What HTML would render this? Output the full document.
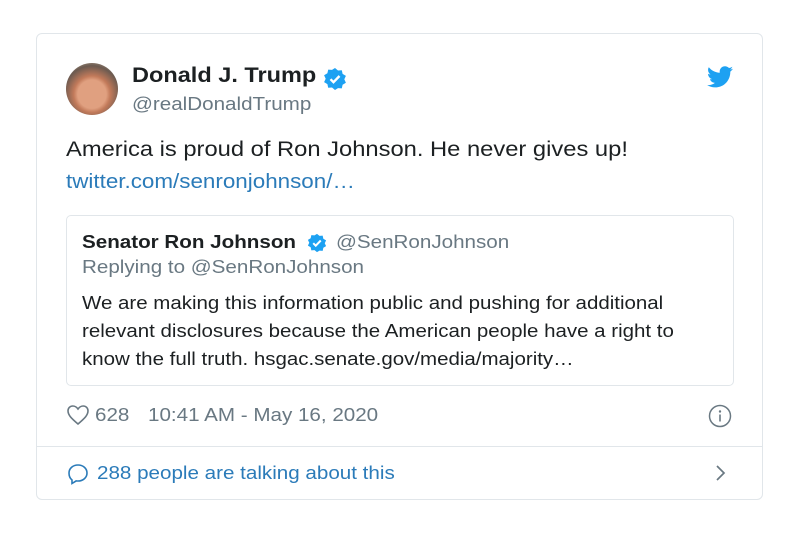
<!DOCTYPE html>
<html><head><meta charset="utf-8"><style>
body{margin:0;width:800px;height:537px;background:#fff;font-family:"Liberation Sans",sans-serif;position:relative;overflow:hidden}
.card{position:absolute;left:36px;top:33px;width:727px;height:467px;border:1px solid #e1e6ea;border-radius:6px;box-sizing:border-box}
.abs{position:absolute;white-space:nowrap}
.s{transform:scaleX(1.12);transform-origin:0 0}
.av{position:absolute;left:66px;top:63px;width:52px;height:52px;border-radius:50%;background:radial-gradient(circle at 50% 60%,#e0a080 0 35%,#c27a5a 45%,#6b5a50 70%,#d8c8b0 100%)}
.quote{position:absolute;left:66px;top:215px;width:668px;height:171px;border:1px solid #e1e6ea;border-radius:5px;box-sizing:border-box}
</style></head><body>
<div class="card"></div>
<div class="av"></div>
<div class="abs s" style="left:132px;top:64px;font-size:21px;font-weight:bold;color:#1c2022">Donald J. Trump</div>
<svg class="abs" style="left:323px;top:67px" width="24" height="24" viewBox="0 0 24 24"><path fill="#1da1f2" d="M12 1l3 2.5 3.8-.3.8 3.7 3.3 2-1.6 3.4 1.6 3.4-3.3 2-.8 3.7-3.8-.3L12 23l-3-2.5-3.8.3-.8-3.7-3.3-2L2.7 11.7 1.1 8.3l3.3-2 .8-3.7 3.8.3z"/><path d="M7.5 12.2l3 3 6-6.2" stroke="#fff" stroke-width="2.4" fill="none"/></svg>
<div class="abs s" style="left:132px;top:93px;font-size:18.4px;color:#697882">@realDonaldTrump</div>
<svg class="abs" style="left:707px;top:66px" width="26" height="22" viewBox="0 0 24 20"><path fill="#1da1f2" d="M24 2.4c-.9.4-1.8.7-2.8.8 1-.6 1.8-1.6 2.2-2.7-1 .6-2 1-3.1 1.2C19.3.7 18 .1 16.6.1c-2.7 0-4.9 2.2-4.9 4.9 0 .4 0 .8.1 1.1C7.7 5.9 4.1 4 1.7 1 1.2 1.7 1 2.6 1 3.5c0 1.7.9 3.2 2.2 4.1-.8 0-1.6-.2-2.2-.6v.1c0 2.4 1.7 4.4 3.9 4.8-.4.1-.8.2-1.3.2-.3 0-.6 0-.9-.1.6 2 2.4 3.4 4.6 3.4-1.7 1.3-3.8 2.1-6.1 2.1-.4 0-.8 0-1.2-.1 2.2 1.4 4.8 2.2 7.5 2.2 9.1 0 14-7.5 14-14v-.6c1-.7 1.8-1.6 2.5-2.6z"/></svg>
<div class="abs s" style="left:66px;top:138px;font-size:21.2px;color:#1c2022">America is proud of Ron Johnson. He never gives up!</div>
<div class="abs s" style="left:66px;top:171px;font-size:20px;color:#2b7bb9">twitter.com/senronjohnson/…</div>
<div class="quote"></div>
<div class="abs s" style="left:82px;top:231px;font-size:18.4px;font-weight:bold;color:#1c2022">Senator Ron Johnson</div>
<svg class="abs" style="left:307px;top:233px" width="20" height="20" viewBox="0 0 24 24"><path fill="#1da1f2" d="M12 1l3 2.5 3.8-.3.8 3.7 3.3 2-1.6 3.4 1.6 3.4-3.3 2-.8 3.7-3.8-.3L12 23l-3-2.5-3.8.3-.8-3.7-3.3-2L2.7 11.7 1.1 8.3l3.3-2 .8-3.7 3.8.3z"/><path d="M7.5 12.2l3 3 6-6.2" stroke="#fff" stroke-width="2.4" fill="none"/></svg>
<div class="abs s" style="left:336px;top:231px;font-size:18.4px;color:#697882">@SenRonJohnson</div>
<div class="abs s" style="left:82px;top:256px;font-size:18.4px;color:#697882">Replying to @SenRonJohnson</div>
<div class="abs s" style="left:82px;top:289px;font-size:18.3px;line-height:28px;color:#1c2022">We are making this information public and pushing for additional<br>relevant disclosures because the American people have a right to<br>know the full truth. hsgac.senate.gov/media/majority…</div>
<svg class="abs" style="left:66px;top:404px" width="24" height="22" viewBox="0 0 24 22"><path d="M12 20C5 14 2 11 2 6.8 2 4 4.2 2 6.8 2 9 2 10.8 3.3 12 5c1.2-1.7 3-3 5.2-3C19.8 2 22 4 22 6.8 22 11 19 14 12 20z" fill="none" stroke="#697882" stroke-width="1.6"/></svg>
<div class="abs s" style="left:95px;top:404px;font-size:18.4px;color:#697882">628</div>
<div class="abs s" style="left:148px;top:404px;font-size:18.4px;color:#697882">10:41 AM - May 16, 2020</div>
<svg class="abs" style="left:708px;top:404px" width="24" height="24" viewBox="0 0 24 24"><circle cx="12" cy="12" r="10.5" fill="none" stroke="#697882" stroke-width="1.5"/><circle cx="12" cy="7.5" r="1.2" fill="#697882"/><path d="M12 10.5v7" stroke="#697882" stroke-width="1.6"/></svg>
<div class="abs" style="left:37px;top:446px;width:725px;height:1px;background:#e1e6ea"></div>
<svg class="abs" style="left:66px;top:462px" width="24" height="24" viewBox="0 0 24 24"><path d="M12 3c5 0 9 3.4 9 8s-4 8-9 8c-.6 0-1.2 0-1.8-.1L6 21.5V18c-1.9-1.5-3-3.8-3-7 0-4.6 4-8 9-8z" fill="none" stroke="#2b7bb9" stroke-width="1.6"/></svg>
<div class="abs s" style="left:97px;top:462px;font-size:18.4px;color:#2b7bb9">288 people are talking about this</div>
<svg class="abs" style="left:713px;top:463px" width="14" height="20" viewBox="0 0 14 20"><path d="M4 3l7 7-7 7" fill="none" stroke="#697882" stroke-width="1.7"/></svg>
</body></html>
